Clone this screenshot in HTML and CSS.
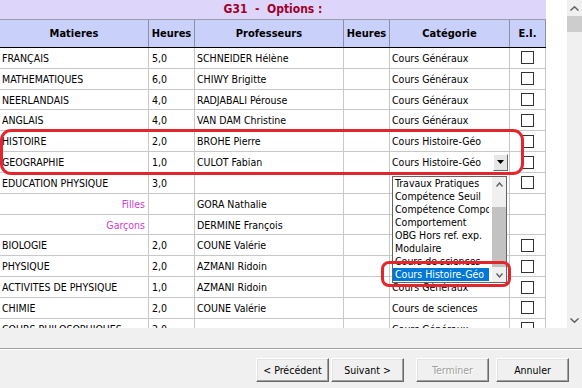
FILE: index.html
```html
<!DOCTYPE html>
<html lang="fr">
<head>
  <meta charset="UTF-8">
  <title>G31 - Options</title>
  <link rel="stylesheet" href="styles.css">
</head>
<body>
<div class="wizard">
  <div class="view">
    <div class="sheet">
      <div class="title">G31&nbsp; - &nbsp;Options :</div>
      <div class="row head">
        <span>Matieres</span><span>Heures</span><span>Professeurs</span><span>Heures</span><span>Catégorie</span><span>E.I.</span>
      </div>
      <div class="row"><span>FRANÇAIS</span><span>5,0</span><span>SCHNEIDER Hélène</span><span></span><span>Cours Généraux</span><span class="ei"><i class="cb"></i></span></div>
      <div class="row"><span>MATHEMATIQUES</span><span>6,0</span><span>CHIWY Brigitte</span><span></span><span>Cours Généraux</span><span class="ei"><i class="cb"></i></span></div>
      <div class="row"><span>NEERLANDAIS</span><span>4,0</span><span>RADJABALI Pérouse</span><span></span><span>Cours Généraux</span><span class="ei"><i class="cb"></i></span></div>
      <div class="row"><span>ANGLAIS</span><span>4,0</span><span>VAN DAM Christine</span><span></span><span>Cours Généraux</span><span class="ei"><i class="cb"></i></span></div>
      <div class="row"><span>HISTOIRE</span><span>2,0</span><span>BROHE Pierre</span><span></span><span>Cours Histoire-Géo</span><span class="ei"><i class="cb"></i></span></div>
      <div class="row"><span>GEOGRAPHIE</span><span>1,0</span><span>CULOT Fabian</span><span></span>
        <span class="combo"><b>Cours Histoire-Géo</b><em class="drop"><svg width="7" height="4" viewBox="0 0 7 4"><polygon points="0,0 7,0 3.5,4" fill="#000"/></svg></em></span>
        <span class="ei"><i class="cb"></i></span></div>
      <!-- category cells below are hidden by the open list -->
      <div class="row"><span>EDUCATION PHYSIQUE</span><span>3,0</span><span></span><span></span><span></span><span class="ei"><i class="cb"></i></span></div>
      <div class="row"><span class="sub">Filles</span><span></span><span>GORA Nathalie</span><span></span><span></span><span class="ei"></span></div>
      <div class="row"><span class="sub">Garçons</span><span></span><span>DERMINE François</span><span></span><span></span><span class="ei"></span></div>
      <div class="row"><span>BIOLOGIE</span><span>2,0</span><span>COUNE Valérie</span><span></span><span></span><span class="ei"><i class="cb"></i></span></div>
      <div class="row"><span>PHYSIQUE</span><span>2,0</span><span>AZMANI Ridoin</span><span></span><span></span><span class="ei"><i class="cb"></i></span></div>
      <div class="row"><span>ACTIVITES DE PHYSIQUE</span><span>1,0</span><span>AZMANI Ridoin</span><span></span><span>Cours Généraux</span><span class="ei"><i class="cb"></i></span></div>
      <div class="row"><span>CHIMIE</span><span>2,0</span><span>COUNE Valérie</span><span></span><span>Cours de sciences</span><span class="ei"><i class="cb"></i></span></div>
      <div class="row"><span>COURS PHILOSOPHIQUES</span><span>2,0</span><span></span><span></span><span>Cours Généraux</span><span class="ei"><i class="cb"></i></span></div>

      <div class="combo-list">
        <div class="opts">
          <div class="opt">Travaux Pratiques</div>
          <div class="opt">Compétence Seuil</div>
          <div class="opt">Compétence Compo</div>
          <div class="opt">Comportement</div>
          <div class="opt">OBG Hors ref. exp.</div>
          <div class="opt">Modulaire</div>
          <div class="opt">Cours de sciences</div>
          <div class="opt sel">Cours Histoire-Géo</div>
        </div>
        <div class="lscroll">
          <div class="arr"><svg width="7" height="5" viewBox="0 0 7 5"><polyline points="0.5,4.5 3.5,1 6.5,4.5" fill="none" stroke="#606060" stroke-width="1.4"/></svg></div>
          <div class="lgap"></div>
          <div class="lthumb"></div>
          <div class="lfill"></div>
          <div class="arr"><svg width="7" height="5" viewBox="0 0 7 5"><polyline points="0.5,0.5 3.5,4 6.5,0.5" fill="none" stroke="#606060" stroke-width="1.4"/></svg></div>
        </div>
      </div>

      <div class="mark mark-rows"></div>
      <div class="mark mark-item"></div>
    </div>
    <div class="vscroll">
      <div class="varr"><svg width="9" height="5" viewBox="0 0 9 5"><polyline points="0.5,4.5 4.5,0.8 8.5,4.5" fill="none" stroke="#606060" stroke-width="1.5"/></svg></div>
      <div class="vthumb"></div>
      <div class="vfill"></div>
      <div class="varr"><svg width="9" height="5" viewBox="0 0 9 5"><polyline points="0.5,0.5 4.5,4.2 8.5,0.5" fill="none" stroke="#606060" stroke-width="1.5"/></svg></div>
    </div>
  </div>
  <div class="footer">
    <div class="sep"></div>
    <div class="buttons">
      <button class="btn">&lt; Précédent</button>
      <button class="btn">Suivant &gt;</button>
      <button class="btn btn-off" disabled>Terminer</button>
      <button class="btn btn-last">Annuler</button>
    </div>
  </div>
</div>
</body>
</html>
```

FILE: styles.css
```css
body {
  margin: 0;
  background: #f0f0f0;
  font-family: "DejaVu Sans Condensed", "DejaVu Sans", sans-serif;
  font-size: 10.5px;
  color: #000;
}
.wizard {
  height: 388px;
  overflow: hidden;
}
.view {
  display: flex;
  height: 328px;
}
.sheet {
  position: relative;
  flex: 1;
  background: #fff;
  overflow: hidden;
}
.title {
  width: 546px;
  height: 20px;
  line-height: 19px;
  box-sizing: border-box;
  border-bottom: 1px solid #9c9cb0;
  background: #ddd6fa;
  color: #a0002a;
  font-size: 12px;
  font-weight: bold;
  text-align: center;
}
.row {
  display: grid;
  grid-template-columns: 149px 46px 149px 46px 120px 36px;
  width: 546px;
  height: 20.83px;
  box-sizing: border-box;
  border-bottom: 1px solid #c8c8c8;
}
.row > span {
  border-right: 1px solid #c8c8c8;
  padding-left: 2px;
  line-height: 20px;
  white-space: nowrap;
  overflow: hidden;
}
.row > span:nth-child(2) {
  padding-left: 3px;
}
.row.head {
  height: 28px;
  background: #c9d0fa;
  border-bottom: 1px solid #000;
  font-size: 11px;
  font-weight: bold;
  text-align: center;
}
.row.head > span {
  line-height: 27px;
  padding: 0;
  border-right-color: #8e8ea8;
}
.row > span.sub {
  text-align: right;
  padding-right: 3px;
  color: #d03cd0;
}
.row > span.ei {
  display: flex;
  align-items: center;
  justify-content: center;
  padding: 0;
}
.cb {
  width: 13px;
  height: 13px;
  box-sizing: border-box;
  border: 1px solid #333;
  background: #fff;
}
.row > span.combo {
  display: flex;
  align-items: center;
  padding-right: 1px;
}
.combo b {
  flex: 1;
  font-weight: normal;
}
.drop {
  display: flex;
  align-items: center;
  justify-content: center;
  width: 15px;
  height: 17px;
  box-sizing: border-box;
  background: #e6e6e6;
  border-right: 1px solid #696969;
  border-bottom: 1px solid #696969;
  border-top: 1px solid #fff;
  border-left: 1px solid #fff;
}

/* open dropdown of the category cell */
.combo-list {
  position: absolute;
  left: 392px;
  top: 176px;
  width: 115px;
  height: 107px;
  box-sizing: border-box;
  border: 1px solid #646464;
  background: #fff;
  display: flex;
}
.opts {
  width: 96px;
  overflow: hidden;
}
.opt {
  height: 13px;
  line-height: 13px;
  padding-left: 2px;
  white-space: nowrap;
}
.opt.sel {
  background: #0078d7;
  color: #fff;
}
.lscroll {
  width: 14px;
  margin-left: 3px;
  display: flex;
  flex-direction: column;
  background: #f0f0f0;
}
.arr {
  height: 14px;
  display: flex;
  align-items: center;
  justify-content: center;
}
.lgap {
  height: 16px;
}
.lthumb {
  height: 60px;
  background: #c2c2c2;
}
.lfill {
  flex: 1;
}

/* red annotations */
.mark {
  position: absolute;
  box-sizing: border-box;
  border: 3px solid #e3262b;
  border-radius: 11px;
}
.mark-rows {
  left: 0;
  top: 129px;
  width: 524px;
  height: 46px;
}
.mark-item {
  left: 381px;
  top: 261px;
  width: 130px;
  height: 26px;
  border-radius: 8px;
}

.vscroll {
  width: 15px;
  display: flex;
  flex-direction: column;
  background: #f0f0f0;
}
.varr {
  height: 16px;
  display: flex;
  align-items: center;
  justify-content: center;
}
.vthumb {
  height: 16px;
  background: #cdcdcd;
}
.vfill {
  flex: 1;
}

.footer {
  height: 60px;
}
.sep {
  margin-top: 20px;
  border-top: 1px solid #a0a0a0;
  border-bottom: 1px solid #fff;
}
.buttons {
  display: flex;
  justify-content: flex-end;
  gap: 2px;
  padding: 8px 13px 0 0;
}
.btn {
  width: 73px;
  height: 24px;
  box-sizing: border-box;
  font-family: "DejaVu Sans Condensed", "DejaVu Sans", sans-serif;
  font-size: 10.5px;
  color: #000;
  background: #f0f0f0;
  border: 1px solid;
  border-color: #fff #696969 #696969 #fff;
  box-shadow: inset -1px -1px #a0a0a0, inset 1px 1px #e3e3e3;
  padding: 0;
}
.btn-off {
  margin-left: 10px;
  color: #a0a0a0;
  text-shadow: 1px 1px #fff;
}
.btn-last {
  margin-left: 5px;
}
```
